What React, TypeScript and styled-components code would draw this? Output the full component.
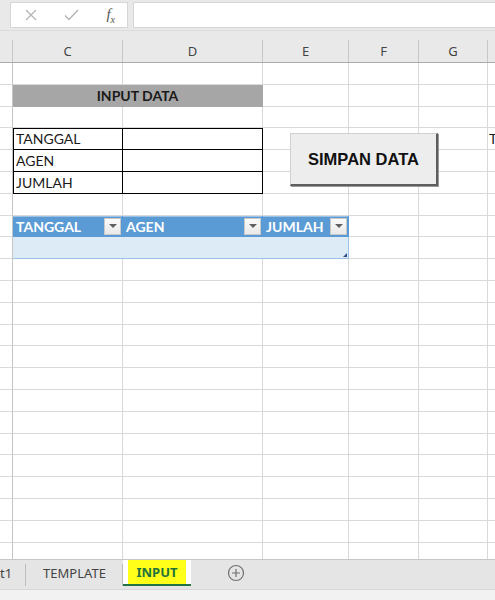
import React from 'react';
import styled, { createGlobalStyle } from 'styled-components';

const GRID = '#d9d9d9';
const CELL_FONT = `Lato, "Liberation Sans", sans-serif`;
const UI_FONT = `"Noto Sans", "Open Sans", sans-serif`;

// column widths: row header stub, C, D, E, F, G, H
const COLS = [13, 110, 140, 86, 70, 69, 60];
const LETTERS = ['', 'C', 'D', 'E', 'F', 'G', ''];
const ROW_COUNT = 23;
const rowHeights = Array.from(
  { length: ROW_COUNT },
  (_, i) => Math.round(63 + 21.8 * (i + 1)) - Math.round(63 + 21.8 * i)
);

const GlobalStyle = createGlobalStyle`
  html, body { margin: 0; padding: 0; background: #fff; }
  body { width: 495px; height: 600px; overflow: hidden; }
  * { box-sizing: border-box; }
`;

const Window = styled.div`
  width: 495px;
  height: 600px;
  display: flex;
  flex-direction: column;
  overflow: hidden;
  background: #fff;
`;

const FormulaBar = styled.div`
  height: 31px;
  flex: none;
  display: flex;
  align-items: center;
  gap: 5px;
  padding: 0 0 0 10px;
  background: #e9e9e9;
  border-bottom: 1px solid #dcdcdc;
`;

const EditButtons = styled.div`
  width: 118px;
  height: 26px;
  display: flex;
  align-items: center;
  justify-content: space-between;
  padding: 0 12px 0 14px;
  background: #fff;
  border: 1px solid #d6d6d6;
`;

const FxLabel = styled.span`
  font-family: "Liberation Serif", serif;
  font-style: italic;
  font-size: 15px;
  color: #555;
  sub { font-size: 10px; }
`;

const FormulaInput = styled.div`
  flex: 1;
  height: 26px;
  background: #fff;
  border: 1px solid #d6d6d6;
  border-right: none;
`;

const ColumnHeader = styled.div<{ $cols: string }>`
  height: 32px;
  flex: none;
  display: grid;
  grid-template-columns: ${p => p.$cols};
  align-items: end;
  background: #e9e9e9;
  border-bottom: 1px solid #ababab;
`;

const HeadCell = styled.div`
  height: 22px;
  display: flex;
  align-items: center;
  justify-content: center;
  border-right: 1px solid #c8c8c8;
  font-family: ${UI_FONT};
  font-size: 13px;
  color: #444;
`;

const Sheet = styled.div<{ $cols: string; $rows: string }>`
  position: relative;
  height: 496px;
  flex: none;
  display: grid;
  grid-template-columns: ${p => p.$cols};
  grid-template-rows: ${p => p.$rows};
  overflow: hidden;
`;

const Cell = styled.div<{ $span?: number; $bg?: string; $right?: string; $bottom?: string }>`
  grid-column: span ${p => p.$span ?? 1};
  display: flex;
  align-items: center;
  padding: 0 3px;
  min-width: 0;
  white-space: nowrap;
  overflow: visible;
  background: ${p => p.$bg ?? '#fff'};
  border-right: 1px solid ${p => p.$right ?? GRID};
  border-bottom: 1px solid ${p => p.$bottom ?? GRID};
  font-family: ${CELL_FONT};
  font-size: 14px;
  color: #1a1a1a;
`;

const RowHead = styled(Cell)`
  border-right-color: #c4c4c4;
`;

const EdgeCell = styled(Cell)`
  padding-left: 1px;
`;

const TitleCell = styled(Cell)`
  justify-content: center;
  font-weight: 700;
  font-size: 14px;
`;

const BoxCell = styled(Cell)<{ $first?: boolean; $top?: boolean }>`
  box-shadow: ${p =>
    [p.$first && 'inset 1px 0 0 #000', p.$top && 'inset 0 1px 0 #000']
      .filter(Boolean)
      .join(', ') || 'none'};
`;

const TableHeadCell = styled(Cell)`
  justify-content: space-between;
  padding: 0 1px 0 3px;
  font-weight: 700;
  color: #fff;
  box-shadow: inset 0 1px 0 #9bc2e6;
`;

const FilterButton = styled.span`
  width: 17px;
  height: 17px;
  display: flex;
  align-items: center;
  justify-content: center;
  background: linear-gradient(#fafafa, #e9e9e9);
  border: 1px solid #c9c9c9;

  &::after {
    content: '';
    border-left: 4px solid transparent;
    border-right: 4px solid transparent;
    border-top: 4px solid #606060;
  }
`;

const TableBodyCell = styled(Cell)`
  position: relative;
`;

const ResizeHandle = styled.span`
  position: absolute;
  right: 1px;
  bottom: 1px;
  width: 0;
  height: 0;
  border-left: 4px solid transparent;
  border-bottom: 4px solid #2e4a8c;
`;

const MacroButton = styled.button`
  position: absolute;
  left: 290px;
  top: 70px;
  width: 148px;
  height: 53px;
  padding: 0;
  background: #ededed;
  border: 1px solid #d0d0d0;
  border-right: 2px solid #5e5e5e;
  border-bottom: 2px solid #5e5e5e;
  box-shadow: 1px 1px 0 #9a9a9a;
  font-family: "Liberation Sans", Arial, sans-serif;
  font-weight: 700;
  font-size: 16.5px;
  color: #111;
`;

const TabBar = styled.div`
  height: 30px;
  flex: none;
  display: flex;
  align-items: flex-start;
  background: #e5e5e5;
  border-top: 1px solid #c6c6c6;
  font-family: ${UI_FONT};
  font-size: 13px;
  color: #444;
`;

const Tab = styled.div<{ $width: number; $active?: boolean }>`
  width: ${p => p.$width}px;
  height: 26px;
  flex: none;
  display: flex;
  align-items: center;
  justify-content: center;
  background: ${p =>
    p.$active
      ? '#fff'
      : 'linear-gradient(#bdbdbd, #bdbdbd) right 4px / 1px calc(100% - 4px) no-repeat'};
  border-bottom: ${p => (p.$active ? '2px solid #217346' : 'none')};
`;

const CutTab = styled(Tab)`
  justify-content: flex-start;
`;

const Highlight = styled.span`
  display: flex;
  align-items: center;
  justify-content: center;
  width: 58px;
  height: 100%;
  background: #ffff1a;
  font-weight: 700;
  color: #21733a;
`;

const AddSheet = styled.div`
  height: 26px;
  flex: none;
  display: flex;
  align-items: center;
  padding-left: 36px;
`;

const StatusStrip = styled.div`
  flex: 1;
  background: #f2f2f2;
  border-top: 1px solid #d6d6d6;
`;

const blanks = (from: number, row: number) =>
  COLS.slice(from).map((_, i) => <Cell key={`${row}-${from + i}`} />);

const boxLabels = ['TANGGAL', 'AGEN', 'JUMLAH'];
const tableCols = ['TANGGAL', 'AGEN', 'JUMLAH'];

function renderRow(r: number) {
  const head = <RowHead key={`h${r}`} />;
  if (r === 2) {
    return [
      head,
      <TitleCell key="title" $span={2} $bg="#a6a6a6" $right="#a6a6a6" $bottom="#a6a6a6">
        INPUT DATA
      </TitleCell>,
      ...blanks(3, r),
    ];
  }
  if (r >= 4 && r <= 6) {
    return [
      head,
      <BoxCell key={`l${r}`} $first $top={r === 4} $right="#000" $bottom="#000">
        {boxLabels[r - 4]}
      </BoxCell>,
      <BoxCell key={`v${r}`} $top={r === 4} $right="#000" $bottom="#000" />,
      ...blanks(3, r).slice(0, 3),
      <EdgeCell key={`e${r}`}>{r === 4 ? 'T' : ''}</EdgeCell>,
    ];
  }
  if (r === 8) {
    return [
      head,
      ...tableCols.map(name => (
        <TableHeadCell key={name} $bg="#5b9bd5" $right="#5b9bd5" $bottom="#5b9bd5">
          {name}
          <FilterButton />
        </TableHeadCell>
      )),
      ...blanks(4, r),
    ];
  }
  if (r === 9) {
    return [
      head,
      <TableBodyCell key="tb" $span={3} $bg="#ddebf7" $right="#9bc2e6" $bottom="#9bc2e6">
        <ResizeHandle />
      </TableBodyCell>,
      ...blanks(4, r),
    ];
  }
  return [head, ...blanks(1, r)];
}

const App: React.FC = () => {
  const cols = COLS.map(w => `${w}px`).join(' ');
  const rows = rowHeights.map(h => `${h}px`).join(' ');

  return (
    <Window>
      <GlobalStyle />
      <FormulaBar>
        <EditButtons>
          <svg width="12" height="12" viewBox="0 0 12 12">
            <path d="M1 1 L11 11 M11 1 L1 11" stroke="#b4b4b4" strokeWidth="1.3" />
          </svg>
          <svg width="15" height="12" viewBox="0 0 15 12">
            <path d="M1 6.5 L5 10.5 L14 1" stroke="#b4b4b4" strokeWidth="1.4" fill="none" />
          </svg>
          <FxLabel>
            f<sub>x</sub>
          </FxLabel>
        </EditButtons>
        <FormulaInput />
      </FormulaBar>

      <ColumnHeader $cols={cols}>
        {LETTERS.map((l, i) => (
          <HeadCell key={i}>{l}</HeadCell>
        ))}
      </ColumnHeader>

      <Sheet $cols={cols} $rows={rows}>
        {Array.from({ length: ROW_COUNT }, (_, i) => renderRow(i + 1))}
        <MacroButton>SIMPAN DATA</MacroButton>
      </Sheet>

      <TabBar>
        <CutTab $width={26}>t1</CutTab>
        <Tab $width={97}>TEMPLATE</Tab>
        <Tab $width={68} $active>
          <Highlight>INPUT</Highlight>
        </Tab>
        <AddSheet>
          <svg width="18" height="18" viewBox="0 0 18 18">
            <circle cx="9" cy="9" r="7.5" stroke="#707070" strokeWidth="1.2" fill="none" />
            <path d="M9 5 V13 M5 9 H13" stroke="#707070" strokeWidth="1.2" />
          </svg>
        </AddSheet>
      </TabBar>
      <StatusStrip />
    </Window>
  );
};

export default App;
